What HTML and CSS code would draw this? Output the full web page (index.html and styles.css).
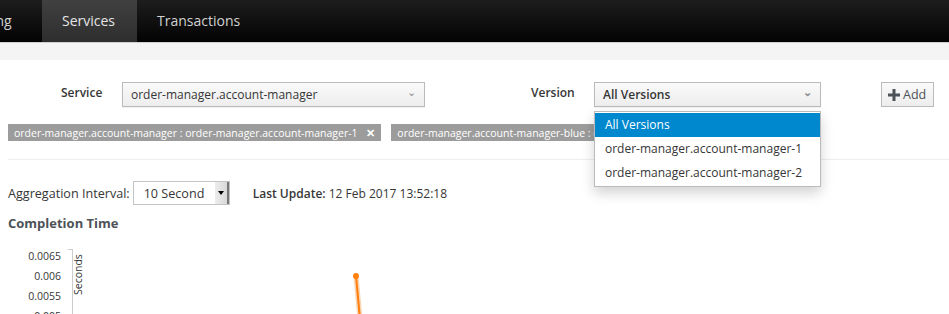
FILE: index.html
```html
<!DOCTYPE html>
<html lang="en">
<head>
  <meta charset="UTF-8" />
  <title>Services</title>
  <link rel="stylesheet" href="styles.css">
</head>
<body>
  <nav class="topnav">
    <a href="#" class="tab first">ing</a>
    <a href="#" class="tab active">Services</a>
    <a href="#" class="tab">Transactions</a>
  </nav>
  <div class="band"></div>

  <main class="content">
    <div class="filter-row">
      <label class="flabel service-label">Service</label>
      <div class="pick service-pick">order-manager.account-manager <span class="caret">&#8964;</span></div>
      <label class="flabel version-label">Version</label>
      <div class="pick-wrap">
        <div class="pick version-pick">All Versions <span class="caret">&#8964;</span></div>
        <ul class="menu">
          <li class="sel">All Versions</li>
          <li>order-manager.account-manager-1</li>
          <li>order-manager.account-manager-2</li>
        </ul>
      </div>
      <button class="add-btn"><svg width="12" height="12" viewBox="0 0 12 12"><path d="M4.5 0h3v4.5H12v3H7.5V12h-3V7.5H0v-3h4.5z" fill="#4d5258"/></svg>Add</button>
    </div>

    <div class="tags">
      <span class="tag">order-manager.account-manager : order-manager.account-manager-1 <b>&#10005;</b></span>
      <span class="tag">order-manager.account-manager-blue : order-manager.account-manager-blue-1 <b>&#10005;</b></span>
    </div>

    <hr class="sep">

    <div class="stats">
      <span class="agg">Aggregation Interval:</span>
      <div class="interval">10 Second<span class="arrow"><svg width="6" height="4" viewBox="0 0 6 4"><path d="M0 0h6L3 4z" fill="#000"/></svg></span></div>
      <span class="upd"><strong>Last Update:</strong> 12 Feb 2017 13:52:18</span>
    </div>

    <h3 class="chart-title">Completion Time</h3>

    <div class="chart">
      <div class="ticks">
        <span>0.0065</span>
        <span>0.006</span>
        <span>0.0055</span>
        <span>0.005</span>
      </div>
      <div class="axis"></div>
      <div class="ylabel">Seconds</div>
      <svg class="plot" width="860" height="70" viewBox="0 0 860 70">
        <path d="M275 27 L279 70" stroke="#fbd3b0" stroke-width="5" fill="none"/>
        <path d="M275 27 L279 70" stroke="#ff7f0e" stroke-width="2" fill="none"/>
        <circle cx="275" cy="27" r="3" fill="#ff7f0e"/>
      </svg>
    </div>
  </main>
</body>
</html>
```

FILE: styles.css
```css
body {
  margin: 0;
  font-family: "Open Sans", "Liberation Sans", sans-serif;
  color: #363636;
  background: #fff;
  overflow: hidden;
}
.topnav {
  display: flex;
  height: 42px;
  background: linear-gradient(#1d1d1d, #030303);
  border-bottom: 1px solid #cfcfcf;
}
.tab {
  display: flex;
  align-items: center;
  padding: 0 20px;
  color: #d1d1d1;
  font-size: 14px;
  text-decoration: none;
  padding-bottom: 2px;
}
.tab.first {
  padding: 0 0 2px;
  width: 42px;
  justify-content: flex-start;
  text-indent: -8px;
  overflow: hidden;
}
.tab.active {
  width: 95px;
  box-sizing: border-box;
  padding: 0 20px 2px;
  background: linear-gradient(#404040, #2e2e2e);
  color: #e4e4e4;
}
.band {
  height: 17px;
  background: #f4f4f4;
}
.content {
  padding: 0 0 0 8px;
}
.filter-row {
  display: flex;
  align-items: flex-start;
  margin-top: 22px;
  height: 25px;
  font-size: 12px;
}
.flabel {
  font-weight: 600;
  line-height: 22px;
}
.service-label {
  margin-left: 53px;
  width: 61px;
}
.pick {
  box-sizing: border-box;
  height: 25px;
  border: 1px solid #bbb;
  background: linear-gradient(#fafafa, #ededed);
  padding: 0 8px;
  line-height: 23px;
  display: flex;
  justify-content: space-between;
  color: #363636;
  box-shadow: 0 1px 1px rgba(0,0,0,.05);
}
.caret {
  color: #8b8d8f;
  font-size: 11px;
  line-height: 18px;
}
.service-pick {
  width: 303px;
}
.version-label {
  margin-left: 106px;
  width: 63px;
}
.pick-wrap {
  position: relative;
  width: 227px;
}
.version-pick {
  width: 227px;
  font-weight: 600;
}
.menu {
  position: absolute;
  top: 29px;
  left: 0;
  width: 227px;
  box-sizing: border-box;
  margin: 0;
  padding: 1px 0;
  list-style: none;
  background: #fff;
  border: 1px solid #bbb;
  box-shadow: 0 6px 12px rgba(0,0,0,.175);
  z-index: 2;
}
.menu li {
  height: 24px;
  line-height: 24px;
  padding: 0 10px;
  font-size: 12px;
  color: #363636;
}
.menu li.sel {
  background: #0088ce;
  color: #fff;
}
.add-btn {
  margin-left: 60px;
  height: 25px;
  width: 53px;
  box-sizing: border-box;
  border: 1px solid #bbb;
  background: linear-gradient(#fafafa, #ededed);
  font-family: inherit;
  font-size: 12.5px;
  color: #4d5258;
  display: flex;
  align-items: center;
  gap: 3px;
  padding: 0 0 0 6px;
}
.tags {
  display: flex;
  gap: 10px;
  margin-top: 17px;
  white-space: nowrap;
}
.tag {
  background: #9c9c9c;
  color: #fff;
  font-size: 10.5px;
  height: 17px;
  line-height: 17px;
  padding: 0 6px;
}
.tag b {
  margin-left: 6px;
  font-size: 11px;
}
.sep {
  border: 0;
  border-top: 1px solid #eeeeee;
  margin: 18px 0 0;
}
.stats {
  display: flex;
  align-items: center;
  margin-top: 21px;
  font-size: 12.6px;
}
.interval {
  margin-left: 3px;
  width: 97px;
  height: 24px;
  box-sizing: border-box;
  border: 1px solid #c4c4c4;
  display: flex;
  justify-content: space-between;
  align-items: center;
  padding-left: 10px;
  font-size: 12.6px;
}
.arrow {
  width: 12px;
  height: 22px;
  background: linear-gradient(90deg, #ececec, #d9d9d9);
  border-right: 2px solid #777;
  display: flex;
  align-items: center;
  justify-content: center;
}
.upd {
  margin-left: 23px;
  font-size: 12px;
}
.upd strong {
  font-weight: 600;
}
.chart-title {
  margin: 9px 0 0;
  font-size: 13px;
  font-weight: 700;
  color: #4d5258;
}
.chart {
  display: flex;
  margin-top: 17px;
  height: 70px;
}
.ticks {
  display: flex;
  flex-direction: column;
  align-items: flex-end;
  width: 53px;
  font-size: 10.5px;
  color: #363636;
  line-height: 20px;
  margin-top: -3px;
}
.axis {
  margin-left: 7px;
  width: 4px;
  border-top: 1px solid #ccc;
  border-right: 1px solid #ccc;
}
.ylabel {
  writing-mode: vertical-rl;
  transform: rotate(180deg);
  font-size: 10.5px;
  height: 40px;
  margin-top: 6px;
  margin-left: -1px;
  line-height: 12px;
}
.plot {
  margin-left: -3px;
}
```
